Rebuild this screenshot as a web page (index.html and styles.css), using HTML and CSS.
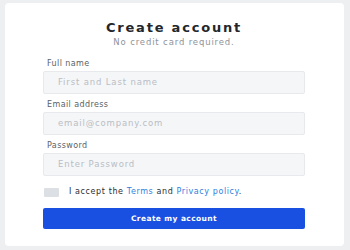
FILE: index.html
```html
<!DOCTYPE html>
<html>
<head>
<meta charset="utf-8">
<link rel="stylesheet" href="styles.css">
</head>
<body>
<div class="card">
  <h1 class="title">Create account</h1>
  <p class="subtitle">No credit card required.</p>
  <form class="form">
    <div class="field">
      <label class="label">Full name</label>
      <div class="input">First and Last name</div>
    </div>
    <div class="field">
      <label class="label">Email address</label>
      <div class="input">email@company.com</div>
    </div>
    <div class="field">
      <label class="label">Password</label>
      <div class="input">Enter Password</div>
    </div>
    <div class="check-row">
      <span class="checkbox"></span>
      <span class="check-text">I accept the <a class="link">Terms</a> and <a class="link">Privacy policy</a>.</span>
    </div>
    <div class="button">Create my account</div>
  </form>
</div>
</body>
</html>
```
FILE: styles.css
```css
html, body {
  margin: 0;
  padding: 0;
  background: #eeeff1;
  font-family: "DejaVu Sans", "Liberation Sans", sans-serif;
}
.card {
  margin: 3px 6px 0 5px;
  height: 243px;
  box-sizing: border-box;
  background: #ffffff;
  border-radius: 4px;
  padding: 17px 39px 0 38px;
}
.title {
  margin: 0;
  text-align: center;
  font-size: 13px;
  line-height: 16px;
  font-weight: 600;
  color: #23272d;
  letter-spacing: 1.8px;
}
.subtitle {
  margin: 0;
  text-align: center;
  font-size: 8.5px;
  line-height: 12px;
  color: #8e939b;
  letter-spacing: 0.85px;
}
.form {
  margin-top: 10px;
  display: flex;
  flex-direction: column;
}
.field {
  display: flex;
  flex-direction: column;
  margin-bottom: 5px;
}
.label {
  font-size: 8px;
  line-height: 12px;
  color: #5a5f66;
  padding-left: 4px;
  margin-bottom: 1px;
  letter-spacing: 0.4px;
}
.input {
  height: 23px;
  box-sizing: border-box;
  background: #f5f6f8;
  border: 1px solid #e7e9ec;
  border-radius: 2px;
  font-size: 8.5px;
  line-height: 21px;
  color: #b9bdc4;
  padding-left: 14px;
  letter-spacing: 0.85px;
}
.check-row {
  margin-top: 6px;
  display: flex;
  align-items: center;
  height: 10px;
}
.checkbox {
  width: 15px;
  height: 9px;
  background: #dcdfe3;
  border-radius: 1px;
  margin-left: 1px;
}
.check-text {
  margin-left: 10px;
  font-size: 8px;
  line-height: 10px;
  color: #2a2e34;
  letter-spacing: 0.6px;
}
.link {
  color: #2f7fe0;
}
.button {
  margin-top: 11px;
  height: 21px;
  background: #1a50e2;
  border-radius: 2px;
  color: #ffffff;
  font-size: 7.5px;
  font-weight: bold;
  line-height: 21px;
  text-align: center;
  letter-spacing: 0.4px;
}
```
